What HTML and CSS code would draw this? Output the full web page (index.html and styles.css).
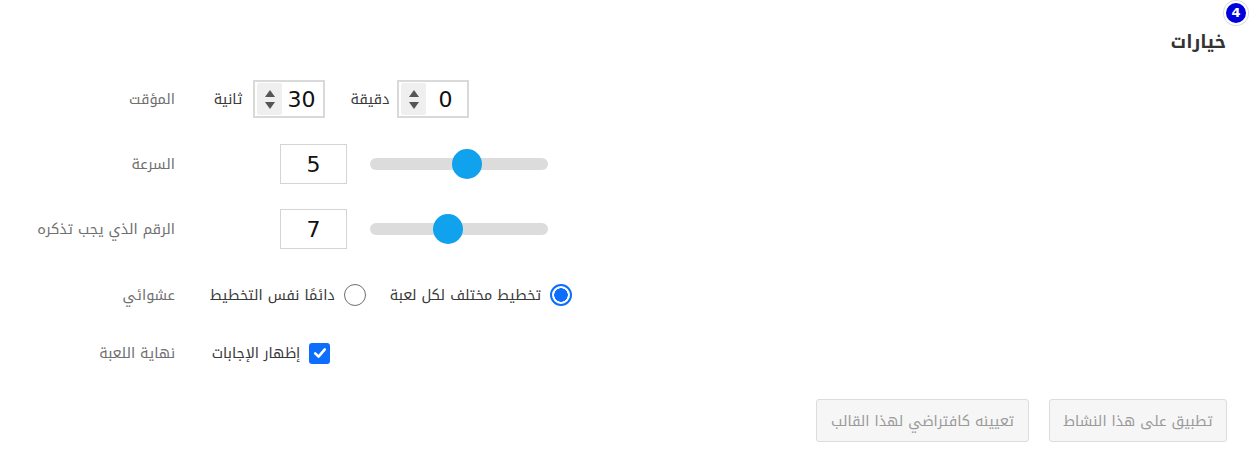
FILE: index.html
```html
<!DOCTYPE html>
<html lang="ar">
<head>
<meta charset="utf-8">
<link rel="stylesheet" href="styles.css">
</head>
<body>
<div class="page">
  <header class="head">
    <h2 class="title">خيارات<span class="badge">4</span></h2>
  </header>

  <div class="form">
    <div class="row r1">
      <div class="label">المؤقت</div>
      <div class="controls">
        <div class="group">
          <div class="spin"><span class="arrows"><span class="up"></span><span class="down"></span></span><span class="val">0</span></div>
          <span class="txt unit-min">دقيقة</span>
        </div>
        <div class="group">
          <div class="spin"><span class="arrows"><span class="up"></span><span class="down"></span></span><span class="val">30</span></div>
          <span class="txt unit-sec">ثانية</span>
        </div>
      </div>
    </div>

    <div class="row r2">
      <div class="label">السرعة</div>
      <div class="controls shift">
        <div class="slider"><div class="track"></div><div class="thumb" style="left:82px"></div></div>
        <div class="numbox">5</div>
      </div>
    </div>

    <div class="row r3">
      <div class="label">الرقم الذي يجب تذكره</div>
      <div class="controls shift">
        <div class="slider"><div class="track"></div><div class="thumb" style="left:63px"></div></div>
        <div class="numbox">7</div>
      </div>
    </div>

    <div class="row r4">
      <div class="label">عشوائي</div>
      <div class="controls">
        <label class="opt first"><span class="radio on"></span><span class="txt">تخطيط مختلف لكل لعبة</span></label>
        <label class="opt"><span class="radio"></span><span class="txt">دائمًا نفس التخطيط</span></label>
      </div>
    </div>

    <div class="row r5">
      <div class="label">نهاية اللعبة</div>
      <div class="controls">
        <label class="opt chk"><span class="check"><svg viewBox="0 0 20 20" width="16" height="16"><path d="M4 10.5 L8.2 14.5 L16 5.5" fill="none" stroke="#fff" stroke-width="3.2" stroke-linecap="round" stroke-linejoin="round"/></svg></span><span class="txt show">إظهار الإجابات</span></label>
      </div>
    </div>
  </div>

  <div class="actions">
    <button class="btn b1">تطبيق على هذا النشاط</button>
    <button class="btn b2">تعيينه كافتراضي لهذا القالب</button>
  </div>
</div>
</body>
</html>
```

FILE: styles.css
```css
html, body {
  margin: 0;
  padding: 0;
  background: #fff;
}
body {
  font-family: "Noto Kufi Arabic", "DejaVu Sans", sans-serif;
  color: #333;
  width: 1259px;
  height: 458px;
  overflow: hidden;
}
.page {
  width: 1259px;
}
.head {
  direction: rtl;
  padding: 26px 33px 0 0;
  height: 41px;
}
.title {
  position: relative;
  margin: 0;
  display: inline-block;
  font-size: 18px;
  font-weight: bold;
  line-height: 32px;
  color: #333;
}
.badge {
  position: absolute;
  top: -25px;
  right: -22px;
  width: 20px;
  height: 20px;
  border-radius: 50%;
  background: #0000dd;
  border: 2px solid #fff;
  box-shadow: 0 0 0 1px #ddd;
  color: #fff;
  font-family: "DejaVu Sans", sans-serif;
  font-size: 13px;
  font-weight: bold;
  line-height: 20px;
  text-align: center;
}
.form {
  display: flex;
  flex-direction: column;
}
.row {
  display: grid;
  grid-template-columns: 175px 1fr;
  column-gap: 35px;
  align-items: center;
}
.r1 { height: 64px; }
.r2 { height: 66px; }
.r3 { height: 64px; }
.r4 { height: 68px; }
.r5 { height: 48px; }
.label {
  direction: rtl;
  text-align: right;
  font-size: 14.5px;
  color: #707070;
}
.controls {
  direction: rtl;
  display: flex;
  justify-content: flex-end;
  align-items: center;
}
.controls.shift {
  padding-left: 70px;
}
.group {
  display: flex;
  align-items: center;
  gap: 7px;
}
.group + .group {
  margin-right: 25px;
}
.txt {
  font-size: 14.5px;
  color: #383838;
}
.unit-min {
  min-width: 40px;
  text-align: center;
}
.unit-sec {
  min-width: 36px;
  text-align: center;
}
.txt.show {
  min-width: 92px;
  text-align: center;
}
.spin {
  direction: ltr;
  box-sizing: border-box;
  width: 72px;
  height: 38px;
  border: 2px solid #d9d9d9;
  display: flex;
  align-items: center;
  padding: 1px 2px;
}
.arrows {
  width: 25px;
  height: 32px;
  background: #efefef;
  border-radius: 2px;
  display: flex;
  flex-direction: column;
  align-items: center;
  justify-content: center;
  gap: 5px;
}
.up, .down {
  width: 0;
  height: 0;
  border-left: 5px solid transparent;
  border-right: 5px solid transparent;
}
.up { border-bottom: 7px solid #555; }
.down { border-top: 7px solid #555; }
.val {
  flex: 1;
  text-align: center;
  font-family: "DejaVu Sans", sans-serif;
  font-size: 22px;
  color: #111;
}
.numbox {
  box-sizing: border-box;
  width: 67px;
  height: 40px;
  border: 1px solid #d4d4d4;
  display: flex;
  align-items: center;
  justify-content: center;
  font-family: "DejaVu Sans", sans-serif;
  font-size: 22px;
  color: #111;
}
.slider {
  position: relative;
  width: 178px;
  height: 30px;
  margin-left: 23px;
  direction: ltr;
}
.track {
  position: absolute;
  left: 0;
  right: 0;
  top: 9px;
  height: 12px;
  border-radius: 6px;
  background: #dcdcdc;
}
.thumb {
  position: absolute;
  top: 0;
  width: 30px;
  height: 30px;
  border-radius: 50%;
  background: #10a2ec;
}
.opt {
  display: flex;
  align-items: center;
  gap: 9px;
}
.opt.first {
  margin-left: 24px;
}
.opt.chk {
  gap: 7px;
}
.radio {
  box-sizing: border-box;
  width: 22px;
  height: 22px;
  border-radius: 50%;
  border: 1.5px solid #6f6f6f;
  background: #fff;
}
.radio.on {
  border: 2px solid #0d6efd;
  background: radial-gradient(circle, #0d6efd 0 6.5px, #fff 7px);
}
.check {
  width: 21px;
  height: 21px;
  border-radius: 3px;
  background: #0d6efd;
  display: flex;
  align-items: center;
  justify-content: center;
}
.actions {
  direction: rtl;
  display: flex;
  gap: 20px;
  padding: 22px 32px 0 0;
}
.btn {
  box-sizing: border-box;
  height: 43px;
  padding: 0;
  white-space: nowrap;
  background: #f6f6f6;
  border: 1px solid #dcdcdc;
  border-radius: 3px;
  font-family: "Noto Kufi Arabic", "DejaVu Sans", sans-serif;
  font-size: 14.5px;
  color: #9a9a9a;
}
.b1 { width: 178px; }
.b2 { width: 213px; }
```
